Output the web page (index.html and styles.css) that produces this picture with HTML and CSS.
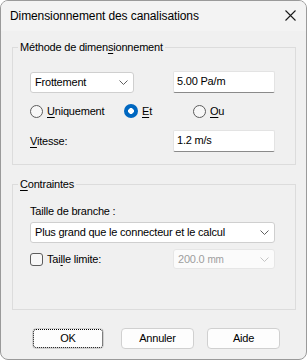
FILE: index.html
```html
<!DOCTYPE html>
<html lang="fr">
<head>
<meta charset="utf-8">
<title>Dimensionnement des canalisations</title>
<link rel="stylesheet" href="styles.css">
</head>
<body>
<div class="window">
  <div class="titlebar">
    <span class="title">Dimensionnement des canalisations</span>
    <svg class="close" width="11" height="11" viewBox="0 0 11 11"><path d="M0.5 0.5L10.5 10.5M10.5 0.5L0.5 10.5" stroke="#1a1a1a" stroke-width="1.1" fill="none"/></svg>
  </div>
  <div class="content">
    <fieldset class="group g1">
      <legend>Méthode de dimen<u>s</u>ionnement</legend>
      <div class="row r1">
        <div class="combo small"><span>Frottement</span><svg class="chev" width="9" height="5" viewBox="0 0 9 5"><path d="M0.5 0.5L4.5 4.5L8.5 0.5" stroke="#606060" fill="none"/></svg></div>
        <div class="edit">5.00 Pa/m</div>
      </div>
      <div class="radios">
        <label class="radio"><span class="dot"></span><span><u>U</u>niquement</span></label>
        <label class="radio"><span class="dot on"></span><span><u>E</u>t</span></label>
        <label class="radio"><span class="dot"></span><span><u>O</u>u</span></label>
      </div>
      <div class="row r3">
        <span><u>V</u>itesse:</span>
        <div class="edit">1.2 m/s</div>
      </div>
    </fieldset>
    <fieldset class="group g2">
      <legend><u>C</u>ontraintes</legend>
      <div class="lbl">Taille de branche :</div>
      <div class="combo wide"><span>Plus grand que le connecteur et le calcul</span><svg class="chev" width="9" height="5" viewBox="0 0 9 5"><path d="M0.5 0.5L4.5 4.5L8.5 0.5" stroke="#606060" fill="none"/></svg></div>
      <div class="row r5">
        <label class="check"><span class="box"></span><span>Tai<u>l</u>le limite:</span></label>
        <div class="combo disabled"><span>200.0 <small>mm</small></span><svg class="chev" width="9" height="5" viewBox="0 0 9 5"><path d="M0.5 0.5L4.5 4.5L8.5 0.5" stroke="#c4c4c4" fill="none"/></svg></div>
      </div>
    </fieldset>
    <div class="buttons">
      <div class="btn ok">OK</div>
      <div class="btn cancel">Annuler</div>
      <div class="btn help">Aide</div>
    </div>
  </div>
</div>
</body>
</html>
```
FILE: styles.css
```css
* { box-sizing: border-box; }
html, body { margin: 0; padding: 0; background: #ffffff; }
body {
  font-family: "Segoe UI", "Liberation Sans", Arial, sans-serif;
  font-size: 11px;
  letter-spacing: -0.2px;
  color: #000;
}
u { text-decoration: underline; text-underline-offset: 2px; }
.window {
  width: 307px;
  height: 360px;
  border: 1px solid #9a9a9a;
  border-radius: 8px;
  background: #f0f0f0;
  overflow: hidden;
  display: flex;
  flex-direction: column;
}
.titlebar {
  height: 30px;
  background: #f3f3f3;
  display: flex;
  align-items: center;
  justify-content: space-between;
  padding: 0 10px 0 9px;
  flex: none;
}
.title { font-size: 12px; letter-spacing: -0.1px; line-height: 15px; margin-top: 1px; }
.close { margin-top: -1px; }
.content { padding: 9px 10px 0 11px; }
.group {
  margin: 0;
  border: 1px solid #dcdcdc;
  padding: 16px 20px 12px 17px;
  min-width: 0;
}
.group legend {
  padding: 0 2px;
  margin-left: -12px;
  line-height: 15px;
}
.row { display: flex; align-items: center; justify-content: space-between; }
.r1 { height: 22px; }
.combo {
  height: 21px;
  background: #fff;
  border: 1px solid #cfcfcf;
  border-radius: 3px;
  display: flex;
  align-items: center;
  justify-content: space-between;
  padding: 0 5px 0 4px;
  line-height: 15px;
  white-space: nowrap;
}
.combo.small { width: 104px; }
.combo.wide { width: 245px; margin-top: 3px; }
.combo.disabled {
  width: 102px;
  height: 20px;
  background: #fbfbfb;
  border-color: #e6e6e6;
  color: #9e9e9e;
}
.combo.disabled small { font-size: 10px; }
.edit {
  width: 102px;
  height: 22px;
  background: #fff;
  border: 1px solid #e3e3e3;
  border-bottom: 1px solid #8a8a8a;
  border-radius: 2px;
  padding: 2px 3px 0 3px;
  line-height: 15px;
  white-space: nowrap;
}
.radios {
  display: grid;
  grid-template-columns: 94px 69px auto;
  margin-top: 10px;
  height: 16px;
  align-items: center;
}
.radio { display: flex; align-items: center; gap: 4px; line-height: 15px; }
.dot {
  width: 13px;
  height: 13px;
  border-radius: 50%;
  border: 1px solid #5c5c5c;
  background: #f7f7f7;
  flex: none;
}
.dot.on {
  width: 14px;
  height: 14px;
  border: none;
  background: radial-gradient(circle, #ffffff 0 2.6px, #0067c0 3.1px);
}
.r3 { margin-top: 11px; height: 22px; }
.lbl { line-height: 15px; }
.r5 { margin-top: 6px; height: 20px; }
.g2 { margin-top: 12px; padding-top: 12px; padding-bottom: 40px; }
.check { display: flex; align-items: center; gap: 4px; line-height: 15px; }
.box {
  width: 13px;
  height: 13px;
  border: 1px solid #5c5c5c;
  border-radius: 3px;
  background: #f7f7f7;
  flex: none;
}
.buttons {
  display: flex;
  margin-top: 18px;
  padding-left: 20px;
}
.btn {
  height: 21px;
  background: #fdfdfd;
  border: 1px solid #d0d0d0;
  border-radius: 4px;
  display: flex;
  align-items: center;
  justify-content: center;
  line-height: 15px;
}
.ok { width: 72px; outline: 1px dotted #000; outline-offset: -2px; }
.cancel { width: 73px; margin-left: 17px; }
.help { width: 73px; margin-left: 13px; }
```
